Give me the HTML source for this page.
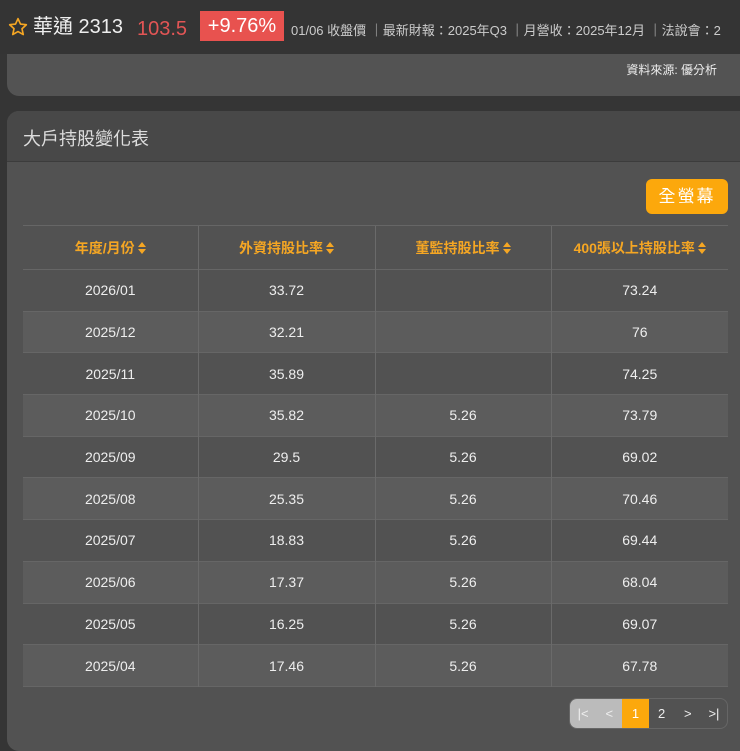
<!DOCTYPE html>
<html><head><meta charset="utf-8"><style>
*{margin:0;padding:0;box-sizing:border-box}
body{width:740px;height:735px;overflow:hidden;background:#353535;font-family:"Liberation Sans","Noto Sans CJK TC",sans-serif;color:#eee;position:relative}
.top{position:absolute;left:0;top:0;width:740px;height:54px;background:#343434;z-index:2;white-space:nowrap}
.card1{position:absolute;left:7px;top:30px;width:760px;height:66px;background:#535353;border-radius:0 0 12px 12px}
.card2{position:absolute;left:7px;top:111px;width:760px;height:640px;background:#525252;border-radius:12px;overflow:hidden}
.ch{height:51px;background:#484848;border-bottom:1px solid #3c3c3c;font-size:18px;color:#ddd;padding:14px 0 0 16px}
.btn{position:absolute;left:646px;top:179px;width:82px;height:35px;background:#fca80c;border-radius:6px;color:#fff;font-size:17px;text-align:center;line-height:35px;letter-spacing:2px}
table{position:absolute;left:23px;top:225px;width:705px;border-collapse:collapse;font-size:14px}
td,th{text-align:center;border-left:1px solid #6a6a6a;border-top:1px solid #666}
td:first-child,th:first-child{border-left:none}
th{height:44px;color:#f5a623;font-weight:bold;font-size:14px}
td{height:41.7px;color:#eee}
tr.a td{background:#5c5c5c}
.ar{display:inline-block;width:8px;height:12px;margin-left:3px;vertical-align:-1px;position:relative}
.ar:before,.ar:after{content:"";position:absolute;left:0;border-left:4px solid transparent;border-right:4px solid transparent}
.ar:before{top:0;border-bottom:5px solid #f5a623}
.ar:after{bottom:0;border-top:5px solid #f5a623}
.pg{position:absolute;left:569px;top:698px;width:159px;height:31px;border:1px solid #666;border-radius:8px;overflow:hidden;display:flex;font-size:13px}
.pg span{width:26.5px;text-align:center;line-height:29px;color:#eee}
.t{position:absolute;top:14px;height:26px;line-height:26px;font-size:20px}
</style></head><body>
<div class="card1"><div style="position:absolute;right:50px;top:31px;font-size:12px;color:#eee">資料來源: 優分析</div></div>
<div class="top">
<svg style="position:absolute;left:8px;top:17px" width="20" height="20" viewBox="0 0 24 24"><path d="M12 2l3 6.5 7 .8-5.2 4.8 1.5 7L12 17.5 5.7 21l1.5-7L2 9.3l7-.8z" fill="none" stroke="#f5a623" stroke-width="2" stroke-linejoin="round"/></svg>
<span class="t" style="left:33px;color:#eee">華通 2313</span>
<span class="t" style="left:137px;top:16px;color:#e25555">103.5</span>
<span style="position:absolute;left:200px;top:11px;width:84px;height:30px;background:#e8524f;color:#fff;font-size:20px;text-align:center;line-height:30px">+9.76%</span>
<span style="position:absolute;left:291px;top:20px;font-size:13px;color:#ccc">01/06 收盤價 ｜最新財報：2025年Q3 ｜月營收：2025年12月 ｜法說會：2</span>
</div>
<div class="card2"><div class="ch">大戶持股變化表</div></div>
<div class="btn">全螢幕</div>
<table>
<tr><th style="width:175px">年度/月份<span class="ar"></span></th><th style="width:177px">外資持股比率<span class="ar"></span></th><th style="width:176px">董監持股比率<span class="ar"></span></th><th>400張以上持股比率<span class="ar"></span></th></tr>
<tr><td>2026/01</td><td>33.72</td><td></td><td>73.24</td></tr>
<tr class="a"><td>2025/12</td><td>32.21</td><td></td><td>76</td></tr>
<tr><td>2025/11</td><td>35.89</td><td></td><td>74.25</td></tr>
<tr class="a"><td>2025/10</td><td>35.82</td><td>5.26</td><td>73.79</td></tr>
<tr><td>2025/09</td><td>29.5</td><td>5.26</td><td>69.02</td></tr>
<tr class="a"><td>2025/08</td><td>25.35</td><td>5.26</td><td>70.46</td></tr>
<tr><td>2025/07</td><td>18.83</td><td>5.26</td><td>69.44</td></tr>
<tr class="a"><td>2025/06</td><td>17.37</td><td>5.26</td><td>68.04</td></tr>
<tr><td>2025/05</td><td>16.25</td><td>5.26</td><td>69.07</td></tr>
<tr class="a" style="border-bottom:1px solid #666"><td>2025/04</td><td>17.46</td><td>5.26</td><td>67.78</td></tr>
</table>
<div class="pg"><span style="background:#bbb">|&lt;</span><span style="background:#bbb">&lt;</span><span style="background:#fca80c;color:#fff">1</span><span>2</span><span>&gt;</span><span>&gt;|</span></div>
</body></html>
